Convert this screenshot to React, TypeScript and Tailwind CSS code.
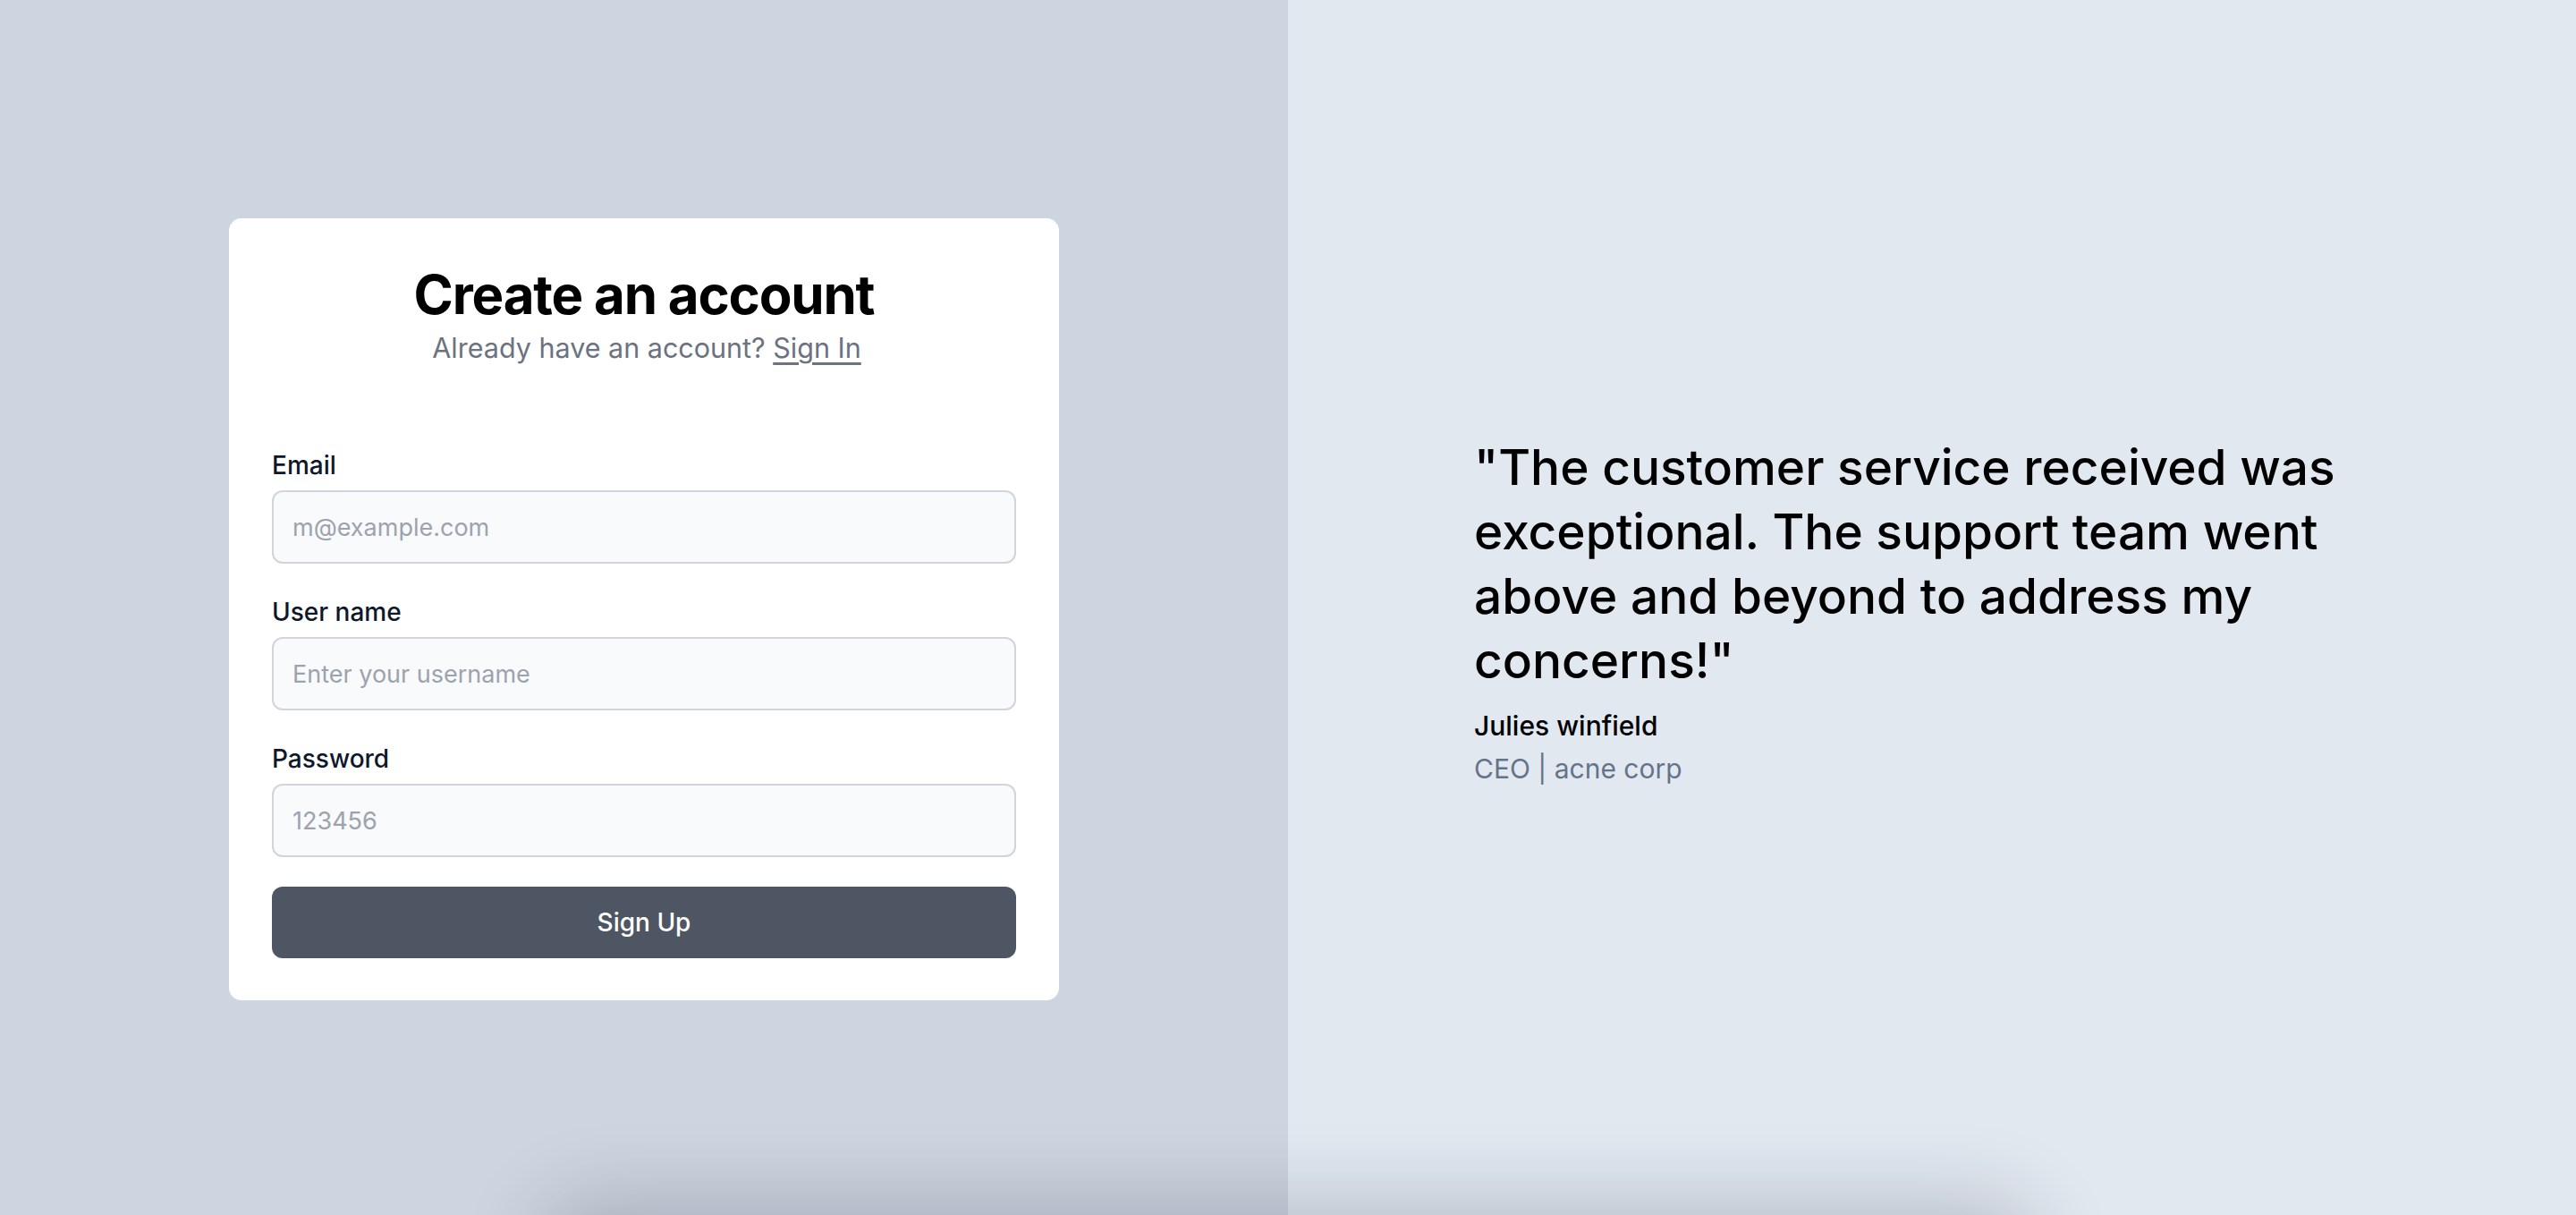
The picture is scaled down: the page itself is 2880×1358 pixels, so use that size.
import { useState } from 'react';

const font = { fontFamily: 'Inter, "Noto Sans", sans-serif' };

function Field({
  label,
  placeholder,
  type = 'text',
  value,
  onChange,
}: {
  label: string;
  placeholder: string;
  type?: string;
  value: string;
  onChange: (v: string) => void;
}) {
  return (
    <div className="flex flex-col gap-[14px]">
      <label className="text-[28px] leading-none font-medium text-[#0f172a]">{label}</label>
      <input
        type={type}
        placeholder={placeholder}
        value={value}
        onChange={(e) => onChange(e.target.value)}
        className="h-[82px] w-full rounded-[12px] border-2 border-[#d1d5db] bg-[#f9fafb] px-[21px] text-[27px] text-[#111827] placeholder-[#9ca3af] outline-none"
      />
    </div>
  );
}

export default function App() {
  const [email, setEmail] = useState('');
  const [username, setUsername] = useState('');
  const [password, setPassword] = useState('');

  return (
    <div style={font} className="relative grid h-screen grid-cols-2 overflow-hidden">
      <div className="flex items-center justify-center bg-[#cdd5e0] pt-[4px]">
        <div className="w-[928px] rounded-[14px] bg-white px-12 pt-[49px] pb-[47px]">
          <div className="text-center">
            <h1 className="text-[60px] leading-[72px] font-bold tracking-[-0.02em] text-black">Create an account</h1>
            <p className="mt-[2px] pl-[6px] text-[30.5px] leading-[44px] text-[#6b7280]">
              Already have an account?{' '}
              <a href="#" className="underline underline-offset-[5px]">
                Sign In
              </a>
            </p>
          </div>

          <form className="mt-[95px] flex flex-col gap-[40px]" onSubmit={(e) => e.preventDefault()}>
            <Field label="Email" placeholder="m@example.com" type="email" value={email} onChange={setEmail} />
            <Field label="User name" placeholder="Enter your username" value={username} onChange={setUsername} />
            <Field label="Password" placeholder="123456" type="password" value={password} onChange={setPassword} />
          </form>
          <button className="mt-[33px] h-[80px] w-full rounded-[12px] bg-[#4e5663] text-[28px] font-medium text-white">
            Sign Up
          </button>
        </div>
      </div>

      <div className="flex items-center justify-center bg-[#e2e8f0] pt-[11px]">
        <div className="w-full max-w-[1024px]">
          <blockquote className="text-[55px] leading-[72px] font-medium text-black">
            "The customer service received was exceptional. The support team went above and beyond to address my
            concerns!"
          </blockquote>
          <div className="mt-[13px] text-[30px] leading-[48px]">
            <p className="font-medium text-black">Julies winfield</p>
            <p className="text-[#64748b]">CEO | acne corp</p>
          </div>
        </div>
      </div>

      <div className="pointer-events-none absolute top-full left-[620px] h-[200px] w-[1640px] rounded-[40px] shadow-[0_0_90px_16px_rgba(15,23,42,0.2)]" />
    </div>
  );
}
